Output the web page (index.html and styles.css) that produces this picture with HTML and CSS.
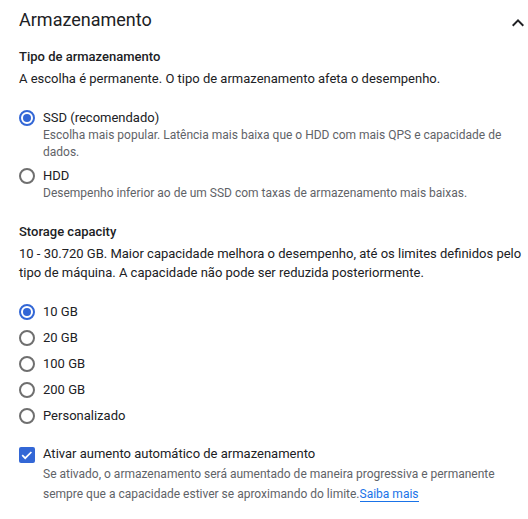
FILE: index.html
```html
<!DOCTYPE html>
<html lang="pt">
<head>
<meta charset="utf-8">
<link rel="stylesheet" href="styles.css">
</head>
<body>
<div class="panel">
  <div class="header">
    <h2 class="title">Armazenamento</h2>
    <svg class="chevron" width="24" height="24" viewBox="0 0 24 24"><path d="M7.41 15.41L12 10.83l4.59 4.58L18 14l-6-6-6 6z" fill="#202124"/></svg>
  </div>

  <div class="section">
    <div class="label">Tipo de armazenamento</div>
    <div class="text">A escolha é permanente. O tipo de armazenamento afeta o desempenho.</div>
    <div class="options">
      <div class="option">
        <span class="radio checked"></span>
        <div class="opt-body">
          <div class="opt-label">SSD (recomendado)</div>
          <div class="opt-desc">Escolha mais popular. Latência mais baixa que o HDD com mais QPS e capacidade de dados.</div>
        </div>
      </div>
      <div class="option">
        <span class="radio"></span>
        <div class="opt-body">
          <div class="opt-label">HDD</div>
          <div class="opt-desc">Desempenho inferior ao de um SSD com taxas de armazenamento mais baixas.</div>
        </div>
      </div>
    </div>
  </div>

  <div class="section cap">
    <div class="label">Storage capacity</div>
    <div class="text tall">10 - 30.720 GB. Maior capacidade melhora o desempenho, até os limites definidos pelo tipo de máquina. A capacidade não pode ser reduzida posteriormente.</div>
    <div class="sizes">
      <div class="size"><span class="radio checked"></span><span class="size-label">10 GB</span></div>
      <div class="size"><span class="radio"></span><span class="size-label">20 GB</span></div>
      <div class="size"><span class="radio"></span><span class="size-label">100 GB</span></div>
      <div class="size"><span class="radio"></span><span class="size-label">200 GB</span></div>
      <div class="size"><span class="radio"></span><span class="size-label">Personalizado</span></div>
    </div>
  </div>

  <div class="auto">
    <span class="checkbox"><svg width="16" height="16" viewBox="0 0 16 16"><path d="M3.2 8.2l3 3 6.2-6.2" fill="none" stroke="#fff" stroke-width="1.7"/></svg></span>
    <div class="opt-body">
      <div class="auto-label">Ativar aumento automático de armazenamento</div>
      <div class="auto-desc">Se ativado, o armazenamento será aumentado de maneira progressiva e permanente sempre que a capacidade estiver se aproximando do limite.<a class="link" href="#">Saiba mais</a></div>
    </div>
  </div>
</div>
</body>
</html>
```

FILE: styles.css
```css
* { box-sizing: border-box; }
html, body { margin: 0; padding: 0; background: #fff; }
body {
  font-family: Roboto, "Noto Sans", Arial, sans-serif;
  color: #202124;
  font-size: 13px;
}
.panel {
  padding: 8px 4px 0 19px;
}
.header {
  display: flex;
  align-items: center;
  justify-content: space-between;
  height: 24px;
}
.title {
  margin: 0;
  font-size: 18px;
  font-weight: 400;
  line-height: 24px;
}
.chevron { margin-right: -6px; margin-top: 6px; }
.section { margin-top: 15px; }
.label {
  font-weight: 500;
  line-height: 20px;
}
.text {
  margin-top: 2px;
  line-height: 20px;
}
.text.tall { margin-top: 2px; line-height: 19px; }
.options { margin-top: 20px; display: flex; flex-direction: column; gap: 6px; }
.option { display: flex; gap: 8px; }
.option .radio { margin-top: 1px; }
.opt-body { flex: 1; }
.opt-label { line-height: 18px; }
.opt-desc {
  color: #5f6368;
  font-size: 12px;
  line-height: 17px;
}
.radio {
  flex: none;
  width: 16px;
  height: 16px;
  border: 2px solid #6f6f6f;
  border-radius: 50%;
  display: inline-flex;
  align-items: center;
  justify-content: center;
}
.radio.checked { border-color: #3367d6; }
.radio.checked::after {
  content: "";
  width: 8px;
  height: 8px;
  border-radius: 50%;
  background: #3367d6;
}
.section.cap { margin-top: 20px; }
.sizes { margin-top: 20px; display: flex; flex-direction: column; gap: 6px; }
.size { display: flex; align-items: center; gap: 8px; height: 20px; }
.size-label { line-height: 20px; }
.auto { display: flex; gap: 8px; margin-top: 18px; }
.auto-label { line-height: 20px; }
.auto-desc {
  color: #5f6368;
  font-size: 12px;
  line-height: 20px;
}
.checkbox {
  flex: none;
  width: 16px;
  height: 16px;
  margin-top: 3px;
  border-radius: 2px;
  background: #3367d6;
  display: flex;
}
.link {
  color: #1a73e8;
  text-decoration: none;
  border-bottom: 1px solid #1a73e8;
}
```
